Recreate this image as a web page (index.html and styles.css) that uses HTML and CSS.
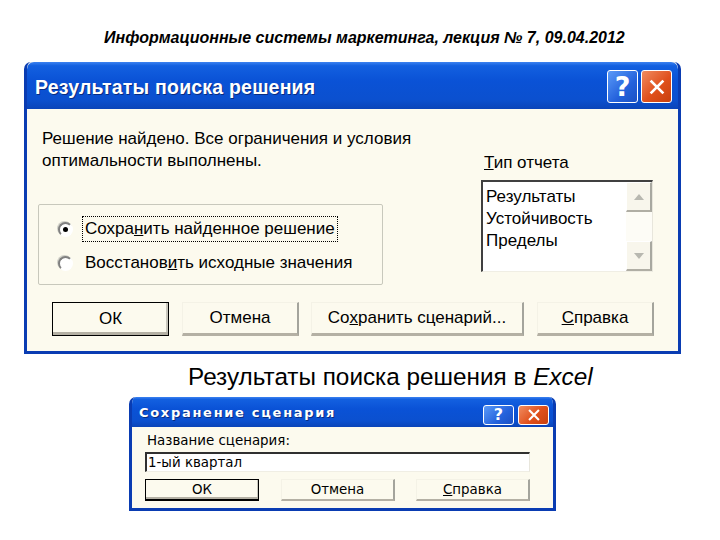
FILE: index.html
```html
<!DOCTYPE html>
<html lang="ru">
<head>
<meta charset="utf-8">
<title>Результаты поиска решения</title>
<link rel="stylesheet" href="styles.css">
</head>
<body>
<div class="page">
  <div class="header">Информационные системы маркетинга, лекция № 7, 09.04.2012</div>

  <div class="dlg main">
    <div class="titlebar">
      <span class="title">Результаты поиска решения</span>
      <span class="tbtn help">?</span>
      <span class="tbtn close"><svg viewBox="0 0 20 20" width="18" height="18"><path d="M4 4 L16 16 M16 4 L4 16" stroke="#fff" stroke-width="3" stroke-linecap="square"/></svg></span>
    </div>
    <div class="body">
      <div class="toprow">
        <div class="leftcol">
          <div class="msg">Решение найдено. Все ограничения и условия<br>оптимальности выполнены.</div>
          <div class="group">
            <div class="radio-row"><span class="radio on"></span><span class="rlabel focus">Сохра<u>н</u>ить найденное решение</span></div>
            <div class="radio-row"><span class="radio"></span><span class="rlabel">Восстанов<u>и</u>ть исходные значения</span></div>
          </div>
        </div>
        <div class="rightcol">
          <div class="lbl"><u>Т</u>ип отчета</div>
          <div class="listbox">
            <div class="items">
              <div>Результаты</div>
              <div>Устойчивость</div>
              <div>Пределы</div>
            </div>
            <div class="scroll">
              <span class="sbtn"><span class="tri up"></span></span>
              <span class="strack"></span>
              <span class="sbtn"><span class="tri down"></span></span>
            </div>
          </div>
        </div>
      </div>
      <div class="btnrow">
        <span class="btn def w117">ОК</span>
        <span class="btn w117 g13">Отмена</span>
        <span class="btn w213 g12">Со<u>х</u>ранить сценарий...</span>
        <span class="btn w117 g13"><u>С</u>правка</span>
      </div>
    </div>
  </div>

  <div class="caption">Результаты поиска решения в <i>Excel</i></div>

  <div class="dlg small">
    <div class="titlebar">
      <span class="title">Сохранение сценария</span>
      <span class="tbtn help">?</span>
      <span class="tbtn close"><svg viewBox="0 0 20 20" width="14" height="14"><path d="M4 4 L16 16 M16 4 L4 16" stroke="#fff" stroke-width="3" stroke-linecap="square"/></svg></span>
    </div>
    <div class="body">
      <div class="slbl">Название сценария:</div>
      <div class="input">1-ый квартал</div>
      <div class="sbtnrow">
        <span class="btn def s114">ОК</span>
        <span class="btn s114 sg22">Отмена</span>
        <span class="btn s114 sg21"><u>С</u>правка</span>
      </div>
    </div>
  </div>
</div>
</body>
</html>
```

FILE: styles.css
```css
html, body {
  margin: 0;
  padding: 0;
  background: #fff;
}
.page {
  width: 720px;
  height: 540px;
  display: flex;
  flex-direction: column;
  font-family: "Liberation Sans", Arial, sans-serif;
  color: #000;
}
.header {
  margin-top: 29px;
  height: 18px;
  line-height: 18px;
  margin-left: 104px;
  font-weight: bold;
  font-style: italic;
  font-size: 16px;
  white-space: nowrap;
}

/* ---------- dialogs ---------- */
.dlg {
  box-sizing: border-box;
  display: flex;
  flex-direction: column;
  flex-shrink: 0;
  background: #fcfaee;
  border: 3px solid #0a3cb2;
  border-top: none;
  border-radius: 7px 7px 0 0;
  overflow: hidden;
}
.titlebar {
  flex-shrink: 0;
  display: flex;
  align-items: center;
  background: linear-gradient(#3c82f0 0%, #1360e0 8%, #0a52d6 40%, #0b50cf 80%, #0a44b8 100%);
  color: #fff;
  font-weight: bold;
}
.title {
  flex: 1;
  white-space: nowrap;
  text-shadow: 1px 1px 0 #0a2c80;
}
.tbtn {
  box-sizing: border-box;
  flex-shrink: 0;
  display: flex;
  align-items: center;
  justify-content: center;
  border: 1px solid #fff;
  border-radius: 3px;
  color: #fff;
}
.tbtn.help {
  background: linear-gradient(135deg, #5a9af8, #2462dc 60%, #1b50c4);
  font-family: "DejaVu Sans", sans-serif;
  font-weight: bold;
}
.tbtn.close {
  background: linear-gradient(135deg, #f08c60, #e0501c 55%, #c8400e);
}

/* main dialog */
.main {
  margin-left: 24px;
  margin-top: 15px;
  width: 657px;
  height: 292px;
}
.main .titlebar {
  height: 47px;
  padding: 0 6px 0 8px;
  border-radius: 7px 7px 0 0;
}
.main .title {
  font-size: 19.5px;
  letter-spacing: 0.2px;
  padding-top: 4px;
}
.main .tbtn {
  width: 31px;
  height: 33px;
  margin-top: 2px;
}
.main .tbtn.help {
  font-size: 27px;
  margin-right: 3px;
}
.main .body {
  padding: 19px 0 0 11px;
  font-size: 17px;
  display: flex;
  flex-direction: column;
}
.toprow {
  display: flex;
}
.leftcol {
  width: 345px;
  flex-shrink: 0;
}
.msg {
  padding-left: 4px;
  line-height: 22px;
  white-space: nowrap;
}
.group {
  box-sizing: border-box;
  margin-top: 32px;
  height: 81px;
  border: 1px solid #c8c8bc;
  border-radius: 2px;
  padding: 7px 0 0 19px;
}
.radio-row {
  display: flex;
  align-items: center;
  height: 34px;
  white-space: nowrap;
}
.radio {
  box-sizing: border-box;
  flex-shrink: 0;
  width: 15px;
  height: 15px;
  border-radius: 50%;
  background: #fff;
  border: 2px solid;
  border-color: #808080 #fff #fff #808080;
  box-shadow: -1px -1px 0 #d0d0c8;
  margin-right: 9px;
  display: flex;
  align-items: center;
  justify-content: center;
}
.radio.on::after {
  content: "";
  width: 5px;
  height: 5px;
  border-radius: 50%;
  background: #000;
}
.rlabel {
  padding: 2px 2px;
  border: 1px dotted transparent;
}
.rlabel.focus {
  border-color: #000;
}
.rightcol {
  margin-left: 98px;
  width: 172px;
  flex-shrink: 0;
  padding-top: 24px;
}
.lbl {
  padding-left: 3px;
  line-height: 22px;
}
.listbox {
  box-sizing: border-box;
  margin-top: 6px;
  height: 92px;
  display: flex;
  background: #fff;
  border-top: 2px solid #404040;
  border-left: 2px solid #404040;
  border-right: 1px solid #e8e6dc;
  border-bottom: 1px solid #f0eee4;
}
.items {
  flex: 1;
  padding: 4px 0 0 3px;
  line-height: 22px;
}
.scroll {
  width: 26px;
  display: flex;
  flex-direction: column;
  background: #fdfcf6;
}
.sbtn {
  box-sizing: border-box;
  height: 30px;
  display: flex;
  align-items: center;
  justify-content: center;
  background: #f8f6ec;
  border-right: 2px solid #a8a8a0;
  border-bottom: 2px solid #b0aea4;
  border-top: 1px solid #fff;
  border-left: 1px solid #fff;
}
.strack {
  flex: 1;
}
.tri {
  width: 0;
  height: 0;
  border-left: 5px solid transparent;
  border-right: 5px solid transparent;
}
.tri.up {
  border-bottom: 6px solid #b8b8b0;
}
.tri.down {
  border-top: 6px solid #b8b8b0;
}

/* buttons */
.btnrow {
  display: flex;
  margin-top: 17px;
  padding-left: 14px;
}
.btn {
  box-sizing: border-box;
  flex-shrink: 0;
  display: flex;
  align-items: center;
  justify-content: center;
  white-space: nowrap;
  background: #fcfaee;
  border-top: 1px solid #f4f2e6;
  border-left: 1px solid #f4f2e6;
  border-right: 2px solid #a4a49c;
  border-bottom: 3px solid #b4b0a4;
}
.btn.def {
  border: 1px solid #000;
  box-shadow: inset 0 -3px 0 #b4b0a4, inset -2px 0 0 #c8c6bc;
}
.main .btn {
  height: 34px;
}
.w117 { width: 117px; }
.w213 { width: 213px; }
.g13 { margin-left: 13px; }
.g12 { margin-left: 12px; }

/* caption */
.caption {
  margin-top: 11px;
  margin-left: 188px;
  height: 24px;
  line-height: 24px;
  font-size: 24.3px;
  white-space: nowrap;
}

/* small dialog */
.small {
  margin-left: 129px;
  margin-top: 8px;
  width: 427px;
  height: 114px;
  font-family: "DejaVu Sans", Verdana, sans-serif;
}
.small .titlebar {
  height: 30px;
  padding: 0 4px 0 7px;
}
.small .title {
  font-size: 13px;
  letter-spacing: 1.7px;
}
.small .tbtn {
  width: 31px;
  height: 20px;
  margin-top: 5px;
}
.small .tbtn.help {
  font-size: 16px;
  margin-right: 4px;
}
.small .body {
  padding: 6px 0 0 13px;
  font-size: 13.4px;
  display: flex;
  flex-direction: column;
}
.slbl {
  padding-left: 2px;
  line-height: 16px;
  height: 16px;
}
.input {
  box-sizing: border-box;
  margin-top: 3px;
  width: 385px;
  height: 20px;
  line-height: 17px;
  background: #fff;
  border-top: 2px solid #303030;
  border-left: 2px solid #303030;
  border-right: 1px solid #e8e6dc;
  border-bottom: 1px solid #f0eee4;
  padding-left: 1px;
}
.sbtnrow {
  display: flex;
  margin-top: 7px;
}
.small .btn {
  height: 22px;
  border-bottom-width: 2px;
}
.small .btn.def {
  box-shadow: inset 0 -2px 0 #b4b0a4, inset -1px 0 0 #c8c6bc;
}
.s114 { width: 114px; }
.sg22 { margin-left: 22px; }
.sg21 { margin-left: 21px; }
```
